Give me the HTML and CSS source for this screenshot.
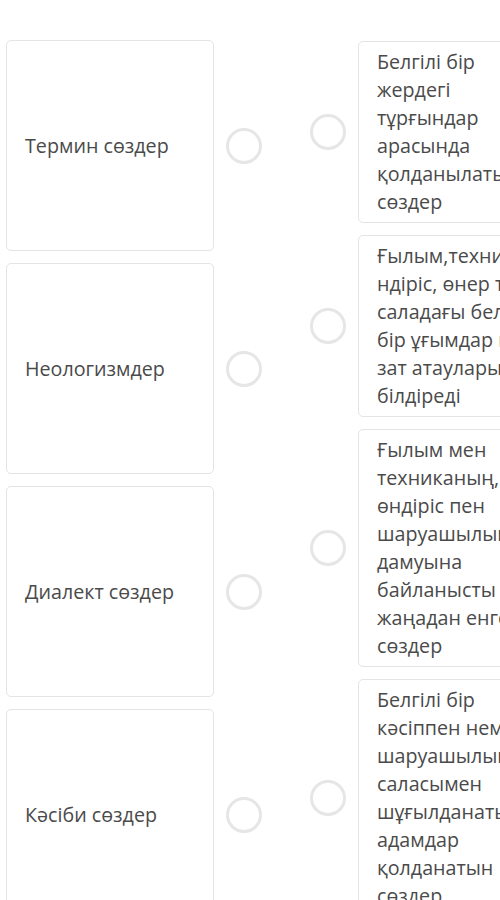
FILE: index.html
```html
<!DOCTYPE html>
<html lang="kk">
<head>
    <meta charset="UTF-8">
    <title>Сәйкестендіру</title>
    <link rel="stylesheet" href="styles.css">
</head>
<body>
    <div class="match">
        <div class="column left">
            <div class="item">
                <div class="card term"><p>Термин сөздер</p></div>
                <span class="dot"></span>
            </div>
            <div class="item">
                <div class="card term"><p>Неологизмдер</p></div>
                <span class="dot"></span>
            </div>
            <div class="item">
                <div class="card term"><p>Диалект сөздер</p></div>
                <span class="dot"></span>
            </div>
            <div class="item">
                <div class="card term"><p>Кәсіби сөздер</p></div>
                <span class="dot"></span>
            </div>
        </div>
        <div class="column right">
            <div class="item">
                <span class="dot"></span>
                <div class="card answer"><p>Белгілі бір жердегі тұрғындар арасында қолданылатын сөздер</p></div>
            </div>
            <div class="item">
                <span class="dot"></span>
                <div class="card answer"><p>Ғылым,техника,өндіріс, өнер т.б. саладағы белгілі бір ұғымдар мен зат атауларын білдіреді</p></div>
            </div>
            <div class="item">
                <span class="dot"></span>
                <div class="card answer"><p>Ғылым мен техниканың, өндіріс пен шаруашылықтың дамуына байланысты жаңадан енген сөздер</p></div>
            </div>
            <div class="item">
                <span class="dot"></span>
                <div class="card answer"><p>Белгілі бір кәсіппен немесе шаруашылық саласымен шұғылданатын адамдар қолданатын сөздер</p></div>
            </div>
        </div>
    </div>
</body>
</html>
```

FILE: styles.css
```css
* {
    margin: 0;
    padding: 0;
    box-sizing: border-box;
}
body {
    background: #fff;
    font-family: "Open Sans", "Noto Sans", sans-serif;
    color: #4a4a4a;
    overflow: hidden;
}
.match {
    display: flex;
    align-items: flex-start;
    gap: 48px;
    padding: 40px 0 0 6px;
    width: 700px;
}
.column {
    display: flex;
    flex-direction: column;
    gap: 12px;
}
.right {
    padding-top: 1px;
}
.item {
    display: flex;
    align-items: center;
    gap: 12px;
}
.card {
    width: 208px;
    border: 1px solid #e4e4e4;
    border-radius: 5px;
    background: #fff;
    font-size: 19.7px;
    line-height: 28px;
    padding: 6px 18px;
}
.term {
    height: 211px;
    display: flex;
    align-items: center;
}
.answer p {
    overflow-wrap: break-word;
}
.dot {
    flex: none;
    width: 36px;
    height: 36px;
    border: 3px solid #e6e6e6;
    border-radius: 50%;
}
```
